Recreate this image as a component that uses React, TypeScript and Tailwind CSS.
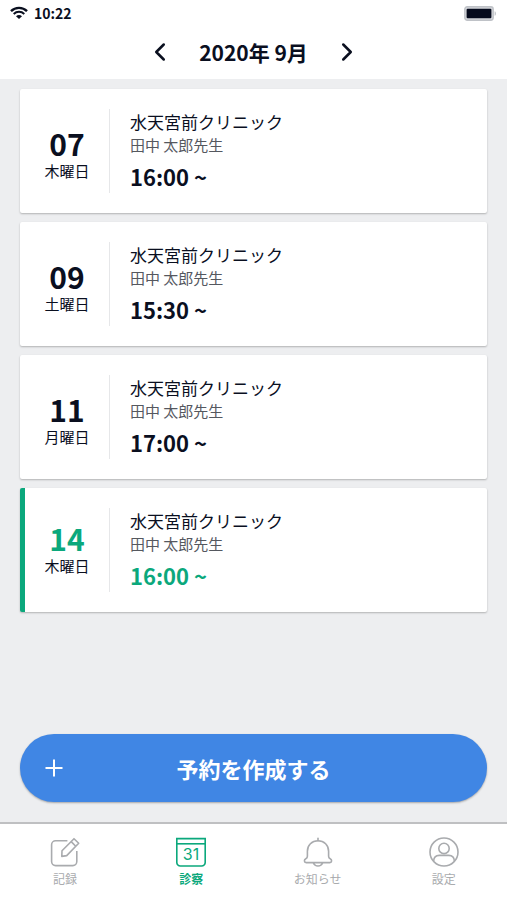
import type { ReactNode } from 'react'
import clsx from 'clsx'
import { ChevronLeft, ChevronRight } from 'lucide-react'

interface Appointment {
  date: string
  weekday: string
  clinic: string
  doctor: string
  time: string
  active?: boolean
}

const appointments: Appointment[] = [
  { date: '07', weekday: '木曜日', clinic: '水天宮前クリニック', doctor: '田中 太郎先生', time: '16:00 ~' },
  { date: '09', weekday: '土曜日', clinic: '水天宮前クリニック', doctor: '田中 太郎先生', time: '15:30 ~' },
  { date: '11', weekday: '月曜日', clinic: '水天宮前クリニック', doctor: '田中 太郎先生', time: '17:00 ~' },
  { date: '14', weekday: '木曜日', clinic: '水天宮前クリニック', doctor: '田中 太郎先生', time: '16:00 ~', active: true },
]

function WifiIcon() {
  return (
    <svg className="w-[18px] h-[14px]" viewBox="0 0 18 14" fill="none" stroke="#0a0f1f" strokeWidth={2}>
      <path d="M1 5.2C5.4.8 12.6.8 17 5.2" strokeWidth={2.4} />
      <path d="M3.7 7.9c3-2.8 7.6-2.8 10.6 0" />
      <path d="M6 10.2c1.8-1.6 4.2-1.6 6 0L9 13z" fill="#0a0f1f" stroke="none" />
    </svg>
  )
}

function BatteryIcon() {
  return (
    <svg className="w-[33px] h-[15px]" viewBox="0 0 33 15">
      <rect x="0.8" y="0.8" width="28.4" height="13.4" rx="2.4" fill="#d5d7db" stroke="#bfc2c7" strokeWidth="1.4" />
      <rect x="2.6" y="2.8" width="24.8" height="9.4" rx="1" fill="#050a1c" />
      <path d="M30.6 5.2c1.8.6 1.8 4 0 4.6z" fill="#bfc2c7" />
    </svg>
  )
}

function RecordIcon() {
  return (
    <svg className="w-[30px] h-[30px]" viewBox="0 0 30 30" fill="none" stroke="currentColor" strokeWidth={1.6} strokeLinejoin="round">
      <path d="M17.4 3.8H5.6a4 4 0 0 0-4 4v16.8a4 4 0 0 0 4 4h17.2a4 4 0 0 0 4-4V14" />
      <path d="M24 1.7l4.7 4.6-12 12.3-4.9.8.2-5.6z" />
      <path d="M21.2 4.6l4.5 4.6" />
    </svg>
  )
}

function CalendarIcon() {
  return (
    <svg className="w-[30px] h-[30px]" viewBox="0 0 30 30" fill="none" stroke="currentColor" strokeWidth={1.6}>
      <path d="M.8 1.6h28.4v23.8a3.6 3.6 0 0 1-3.6 3.6H4.4a3.6 3.6 0 0 1-3.6-3.6z" />
      <path d="M.8 6.8h28.4" />
      <text x="15" y="23" textAnchor="middle" fontSize="16" fontWeight="400" fontFamily="Inter, sans-serif" fill="currentColor" stroke="none">31</text>
    </svg>
  )
}

function BellIcon() {
  return (
    <svg className="w-[30px] h-[30px]" viewBox="0 0 30 30" fill="none" stroke="currentColor" strokeWidth={1.6} strokeLinecap="round" strokeLinejoin="round">
      <path d="M15 1.4v2.4" />
      <path d="M15 3.8C8.8 3.8 4.4 8.2 4.4 14.2v5c0 1.400-.5 2-1.600 2.500-2 1-1.900 3.900.4 3.900h23.600c2.300 0 2.400-2.900.4-3.900-1.100-.5-1.600-1.100-1.600-2.500v-5C25.600 8.200 21.200 3.800 15 3.800z" />
      <path d="M10.400 25.800c.8 2.200 2.400 3.200 4.600 3.200s3.800-1 4.600-3.200" />
    </svg>
  )
}

function UserIcon() {
  return (
    <svg className="w-[30px] h-[30px]" viewBox="0 0 30 30" fill="none" stroke="currentColor" strokeWidth={1.6}>
      <circle cx="15" cy="15" r="14" />
      <circle cx="15" cy="11.4" r="5.2" />
      <path d="M4.6 24.2c.2-4 2.4-5.8 5.6-5.8h9.6c3.2 0 5.4 1.8 5.6 5.8" />
    </svg>
  )
}

function AppointmentCard({ date, weekday, clinic, doctor, time, active }: Appointment) {
  return (
    <li
      className={clsx(
        'flex rounded-xs border-l-5 bg-white py-5 shadow-[0_1px_2px_rgba(0,0,0,0.25)]',
        active ? 'border-[#0ba87c]' : 'border-transparent',
      )}
    >
      <div
        className={clsx(
          'flex w-[85px] flex-col items-center border-r border-[#e6e7e9]',
          active ? 'pt-3' : 'pt-4',
        )}
      >
        <span className={clsx('text-[30px] leading-[36px] font-bold', active && 'text-[#0ba87c]')}>{date}</span>
        <span className="text-[15px] leading-[20px]">{weekday}</span>
      </div>
      <div className="flex-1 pl-5">
        <h2 className="text-[17px] leading-[26px]">{clinic}</h2>
        <p className="text-[15px] leading-[20px] text-[#55585f]">{doctor}</p>
        <p className={clsx('mt-1 text-[22px] leading-[34px] font-bold', active && 'text-[#0ba87c]')}>{time}</p>
      </div>
    </li>
  )
}

interface TabProps {
  icon: ReactNode
  label: string
  active?: boolean
}

function Tab({ icon, label, active }: TabProps) {
  return (
    <a
      href="#"
      aria-current={active ? 'page' : undefined}
      className={clsx('flex flex-1 flex-col items-center', active ? 'font-bold text-[#0ba87c]' : 'text-[#a9abae]')}
    >
      {icon}
      <span className="mt-0.5 text-[12px] leading-[20px]">{label}</span>
    </a>
  )
}

export default function App() {
  return (
    <div
      lang="ja"
      className="flex min-h-screen flex-col bg-[#edeef0] font-['Noto_Sans_CJK_JP',sans-serif] text-[#0a0f1f]"
    >
      <header className="bg-white">
        {/* Status bar */}
        <div className="flex h-[26px] items-center justify-between px-2.5">
          <div className="flex items-center gap-1.5">
            <WifiIcon />
            <span className="text-[14px] leading-[20px] font-bold">10:22</span>
          </div>
          <BatteryIcon />
        </div>

        {/* Month switcher */}
        <div className="flex h-[53px] items-center justify-center gap-6 pb-0.5">
          <button type="button" aria-label="前の月">
            <ChevronLeft size={30} strokeWidth={2} />
          </button>
          <h1 className="text-[21px] leading-[32px] font-bold">2020年 9月</h1>
          <button type="button" aria-label="次の月">
            <ChevronRight size={30} strokeWidth={2} />
          </button>
        </div>
      </header>

      <main className="flex flex-1 flex-col px-5 pt-2.5 pb-5">
        <ul className="flex flex-col gap-[9px]">
          {appointments.map((item) => (
            <AppointmentCard key={item.date} {...item} />
          ))}
        </ul>

        <button
          type="button"
          className="mt-auto grid h-[68px] grid-cols-[1fr_auto_1fr] items-center rounded-full bg-[#4086e4] px-6 text-white shadow-[0_1px_2px_rgba(0,0,0,0.3)]"
        >
          <svg className="h-5 w-5" viewBox="0 0 20 20" fill="none" stroke="currentColor" strokeWidth={2}>
            <path d="M10 1.5v17M1.5 10h17" />
          </svg>
          <span className="text-[22px] leading-[34px] font-bold">予約を作成する</span>
        </button>
      </main>

      <nav className="flex h-[78px] border-t-2 border-[#bfc0c2] bg-white pt-[13px] pl-0.5">
        <Tab icon={<RecordIcon />} label="記録" />
        <Tab icon={<CalendarIcon />} label="診察" active />
        <Tab icon={<BellIcon />} label="お知らせ" />
        <Tab icon={<UserIcon />} label="設定" />
      </nav>
    </div>
  )
}
